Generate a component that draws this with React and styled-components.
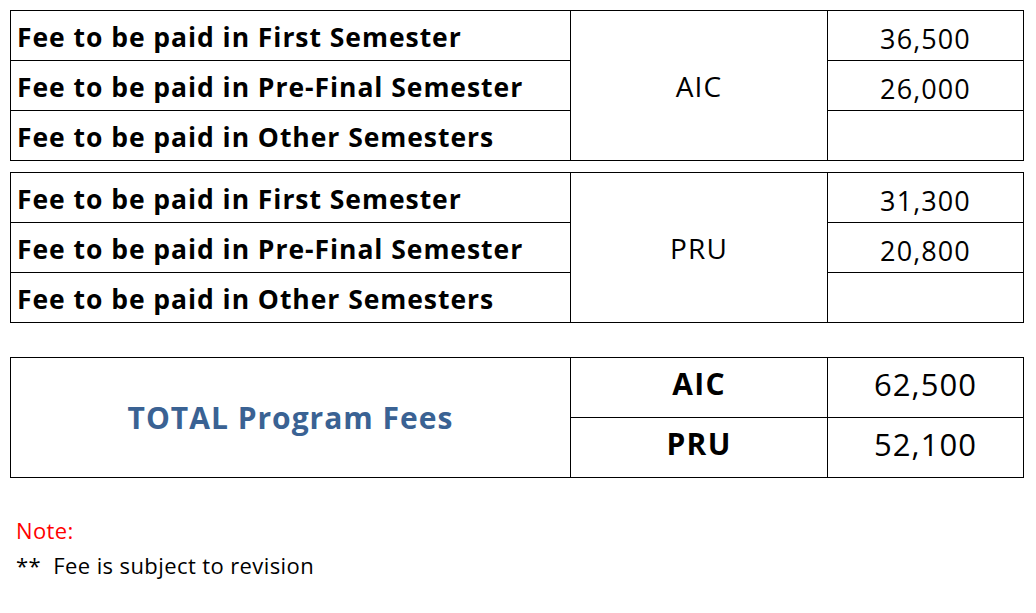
import React from 'react';
import styled, { createGlobalStyle } from 'styled-components';

const GlobalStyle = createGlobalStyle`
  body {
    margin: 0;
    background: #ffffff;
    font-family: 'Open Sans', 'Noto Sans', sans-serif;
    color: #000;
  }
`;

const Page = styled.div`
  padding: 10px 0 0 10px;
  width: 1036px;
  height: 613px;
  box-sizing: border-box;
`;

const Table = styled.table`
  border-collapse: collapse;
  table-layout: fixed;
  width: 1013px;
  margin-bottom: ${(p) => p.$gap || 0}px;

  td {
    border: 1px solid #000;
    padding: 0;
    box-sizing: border-box;
  }
`;

const Row = styled.tr`
  height: ${(p) => p.$h}px;
`;

const LabelCell = styled.td`
  font-size: 26.5px;
  font-weight: 700;
  letter-spacing: 0.95px;
  padding-left: 6px !important;
  padding-top: 2px !important;
  white-space: nowrap;
`;

const CodeCell = styled.td`
  text-align: center;
  font-size: ${(p) => (p.$bold ? 30 : 28)}px;
  font-weight: ${(p) => (p.$bold ? 700 : 400)};
  letter-spacing: ${(p) => (p.$bold ? 1.3 : 1.1)}px;
  padding-bottom: ${(p) => (p.$bold ? 8 : 0)}px !important;
`;

const AmountCell = styled.td`
  text-align: center;
  font-size: ${(p) => (p.$big ? 31 : 27)}px;
  letter-spacing: 1.1px;
  padding-top: ${(p) => (p.$big ? 0 : 6)}px !important;
  padding-bottom: ${(p) => (p.$big ? 8 : 0)}px !important;
`;

const TotalTitle = styled.td`
  text-align: center;
  font-size: 30px;
  font-weight: 700;
  letter-spacing: 1px;
  color: #3a6293;
`;

const Notes = styled.div`
  margin-top: 35px;
  padding-left: 6px;
  font-size: 22px;
  letter-spacing: 0.4px;
  line-height: 35px;
`;

const NoteTitle = styled.div`
  color: #ff0000;
`;

const NoteLine = styled.div`
  white-space: pre;
`;

const semesterRows = ['First Semester', 'Pre-Final Semester', 'Other Semesters'];

const Cols = () => (
  <colgroup>
    <col style={{ width: 560 }} />
    <col style={{ width: 257 }} />
    <col style={{ width: 196 }} />
  </colgroup>
);

const FeeTable = ({ code, amounts, gap }) => (
  <Table $gap={gap}>
    <Cols />
    <tbody>
      {semesterRows.map((s, i) => (
        <Row $h={50} key={s}>
          <LabelCell>Fee to be paid in {s}</LabelCell>
          {i === 0 && <CodeCell rowSpan={3}>{code}</CodeCell>}
          <AmountCell>{amounts[i]}</AmountCell>
        </Row>
      ))}
    </tbody>
  </Table>
);

export default function App() {
  return (
    <Page>
      <GlobalStyle />
      <FeeTable code="AIC" amounts={['36,500', '26,000', '']} gap={11} />
      <FeeTable code="PRU" amounts={['31,300', '20,800', '']} gap={34} />
      <Table>
        <Cols />
        <tbody>
          <Row $h={60}>
            <TotalTitle rowSpan={2}>TOTAL Program Fees</TotalTitle>
            <CodeCell $bold>AIC</CodeCell>
            <AmountCell $big>62,500</AmountCell>
          </Row>
          <Row $h={60}>
            <CodeCell $bold>PRU</CodeCell>
            <AmountCell $big>52,100</AmountCell>
          </Row>
        </tbody>
      </Table>
      <Notes>
        <NoteTitle>Note:</NoteTitle>
        <NoteLine>{'**  Fee is subject to revision'}</NoteLine>
      </Notes>
    </Page>
  );
}
